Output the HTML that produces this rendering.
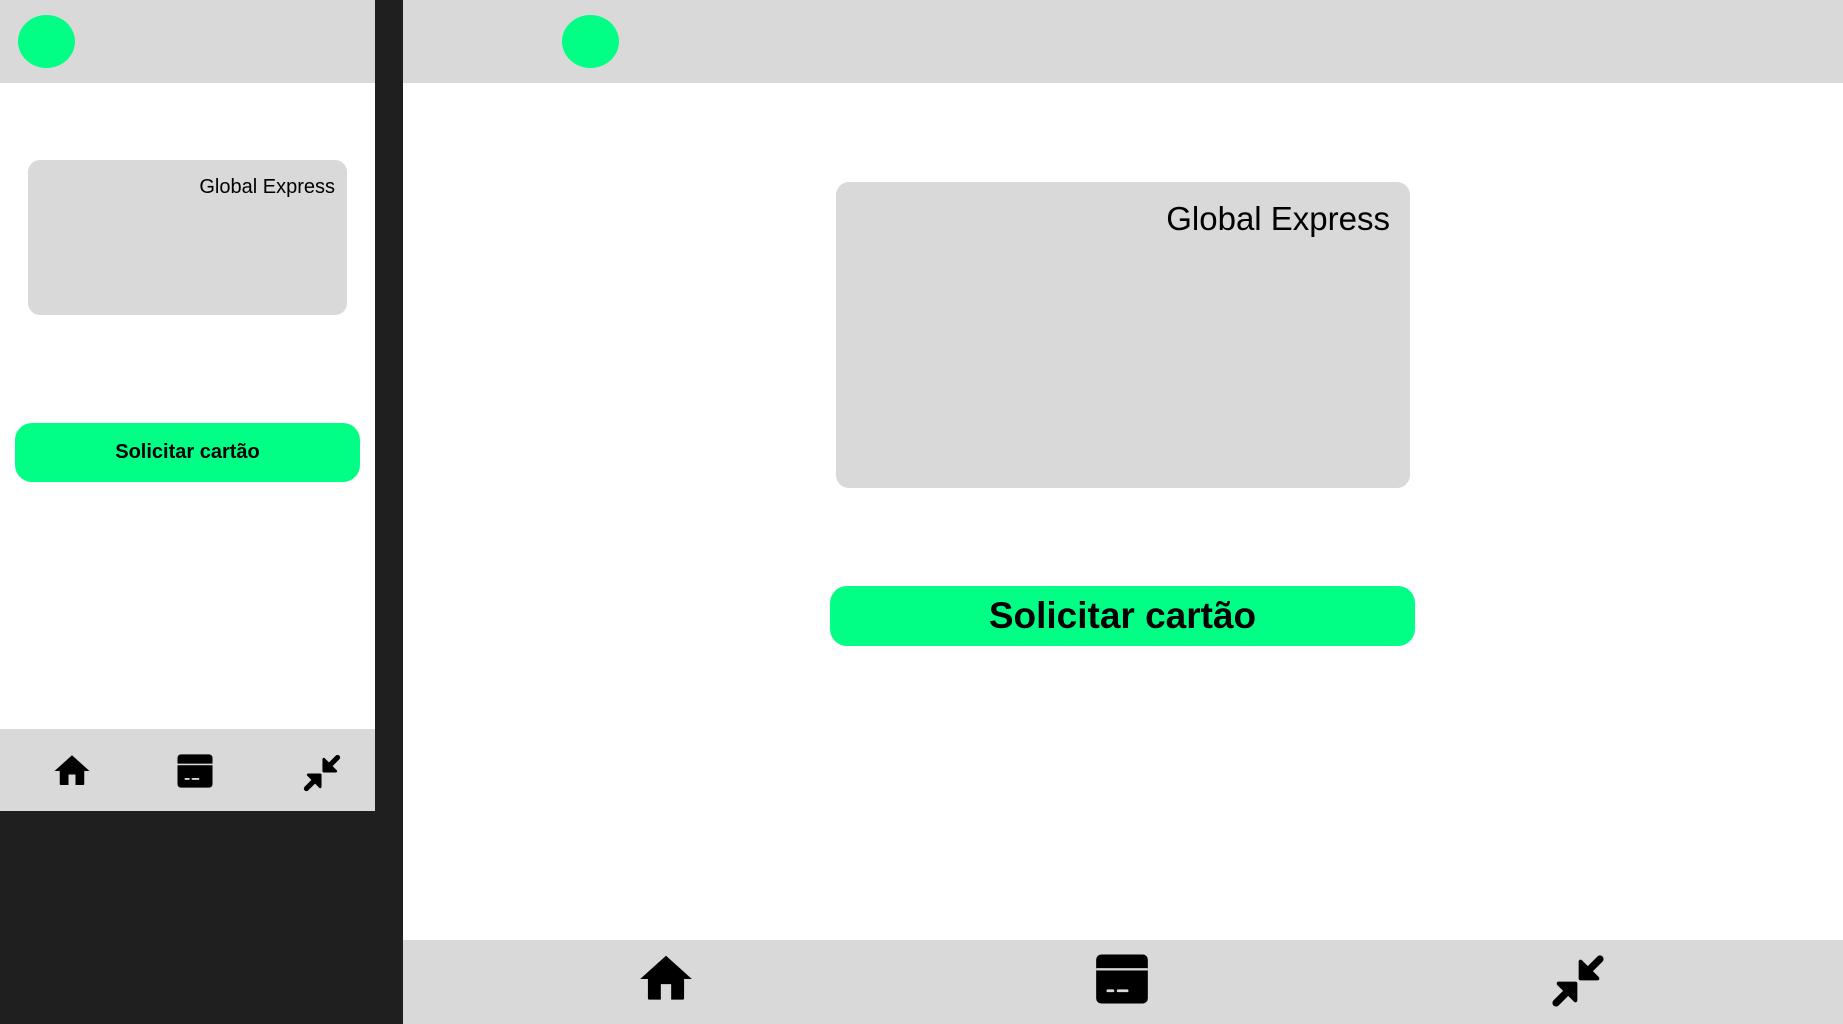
<!DOCTYPE html>
<html><head><meta charset="utf-8"><style>
*{margin:0;padding:0;box-sizing:border-box}
body{width:1843px;height:1024px;background:#1f1f1f;position:relative;overflow:hidden;font-family:"Liberation Sans",sans-serif;color:#000}
.a{position:absolute}
.g{background:#d9d9d9}
.c{background:#00ff84;border-radius:50%}
.btn{background:#00ff84;display:flex;align-items:center;justify-content:center;font-weight:bold}
svg{position:absolute}
</style></head><body>
<div class="a" style="left:0;top:0;width:375px;height:811px;background:#fff"></div>
<div class="a g" style="left:0;top:0;width:375px;height:83px"></div>
<div class="a c" style="left:18px;top:15px;width:57px;height:53px"></div>
<div class="a g" style="left:28px;top:160px;width:319px;height:155px;border-radius:12px"></div>
<div class="a" style="left:28px;top:176px;width:307px;text-align:right;font-size:20px">Global Express</div>
<div class="a btn" style="left:15px;top:423px;width:345px;height:59px;border-radius:17px;font-size:20px">Solicitar cartão</div>
<div class="a g" style="left:0;top:729px;width:375px;height:82px"></div>
<div class="a" style="left:403px;top:0;width:1440px;height:1024px;background:#fff"></div>
<div class="a g" style="left:403px;top:0;width:1440px;height:83px"></div>
<div class="a c" style="left:562px;top:15px;width:57px;height:53px"></div>
<div class="a g" style="left:836px;top:182px;width:574px;height:306px;border-radius:13px"></div>
<div class="a" style="left:836px;top:200px;width:554px;text-align:right;font-size:33px">Global Express</div>
<div class="a btn" style="left:830px;top:586px;width:585px;height:60px;border-radius:17px;font-size:37px">Solicitar cartão</div>
<div class="a g" style="left:403px;top:940px;width:1440px;height:84px"></div>

<svg width="0" height="0"><defs>
<symbol id="home" viewBox="0 0 24 24"><path d="M12 3L2 12h3v7.5c0 .3.2.5.5.5H10v-6h4v6h4.5c.3 0 .5-.2.5-.5V12h3z" fill="#000"/></symbol>
<symbol id="card" viewBox="0 0 24 24"><rect x="2" y="2.5" width="20" height="19" rx="2" fill="#000"/><rect x="2" y="7.8" width="20" height="0.9" fill="#d9d9d9"/><rect x="6" y="16" width="3" height="1.1" rx=".5" fill="#d9d9d9"/><rect x="10" y="16" width="4.5" height="1.1" rx=".5" fill="#d9d9d9"/></symbol>
<symbol id="arr" viewBox="0 0 24 24"><g fill="none" stroke="#000" stroke-width="2.8" stroke-linecap="round"><path d="M20.5 3.5L15 9"/><path d="M3.5 20.5L9 15"/></g><path d="M13 4.5v6.5h6.5z M11 19.5V13H4.5z" fill="#000" stroke="#000" stroke-width="1.5" stroke-linejoin="round"/></symbol>
</defs></svg>
<svg style="left:51px;top:750px" width="42" height="42"><use href="#home"/></svg>
<svg style="left:174px;top:750px" width="42" height="42"><use href="#card"/></svg>
<svg style="left:300px;top:751px" width="44" height="44"><use href="#arr"/></svg>
<svg style="left:635px;top:948px" width="62" height="62"><use href="#home"/></svg>
<svg style="left:1091px;top:948px" width="62" height="62"><use href="#card"/></svg>
<svg style="left:1547px;top:950px" width="62" height="62"><use href="#arr"/></svg>
</body></html>
